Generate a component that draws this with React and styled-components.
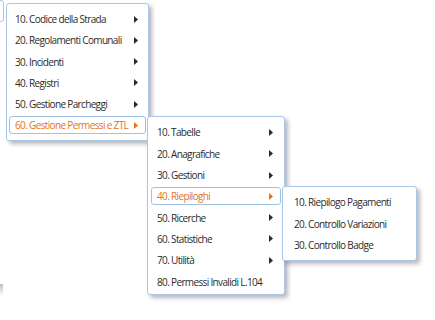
import React from 'react'
import styled, { createGlobalStyle } from 'styled-components'

const GlobalStyle = createGlobalStyle`
  html, body {
    margin: 0;
    padding: 0;
    background: #ffffff;
  }
  body {
    font-family: "Open Sans", "Liberation Sans", sans-serif;
    overflow: hidden;
  }
`

const Page = styled.div`
  position: relative;
  width: 435px;
  height: 320px;
  background: #fff;
  overflow: hidden;
`

const Menubar = styled.div`
  display: flex;
  height: 22px;
`

const BarItem = styled.div`
  margin-left: -10px;
  width: 12px;
  height: 20px;
  border: 1px solid #a9c7e6;
  border-radius: 3px;
`

const Sliver = styled.div`
  position: absolute;
  left: 0;
  top: 284px;
  width: 3px;
  height: 12px;
  background: linear-gradient(#b8c0c8, #ffffff);
`

const Menu = styled.ul`
  position: absolute;
  box-sizing: border-box;
  margin: 0;
  padding: ${p => p.$pad || '6px 2px'};
  list-style: none;
  background: #fff;
  border: 1px solid #a9c7e6;
  border-radius: 3px;
  box-shadow: 3px 3px 4px rgba(0, 0, 0, 0.28);
  display: flex;
  flex-direction: column;
  gap: 3.3px;
  width: ${p => p.$w}px;
`

const RootMenu = styled(Menu)`
  left: 6px;
  top: 3px;
  z-index: 1;
`

const SubMenu = styled(Menu)`
  left: calc(100% + 2px);
  top: ${p => p.$top}px;
`

const Item = styled.li`
  position: relative;
  display: flex;
  align-items: center;
  justify-content: space-between;
  box-sizing: border-box;
  height: 18px;
  padding: 0 7px 0 ${p => p.$left}px;
  border: 1px solid ${p => (p.$active ? '#9fc2e4' : 'transparent')};
  border-radius: 3px;
`

const Label = styled.span`
  font-size: 10px;
  letter-spacing: -0.65px;
  color: ${p => (p.$active ? '#e4731d' : '#2b2b2b')};
  white-space: nowrap;
`

const Arrow = ({ active }) => (
  <svg width="4" height="7" viewBox="0 0 4 7">
    <path d="M0 0 L4 3.5 L0 7 Z" fill={active ? '#e4731d' : '#1f2a3a'} />
  </svg>
)

const riepiloghi = {
  w: 135,
  pad: '6px 3px',
  left: 7,
  top: -2,
  items: [
    { label: '10. Riepilogo Pagamenti' },
    { label: '20. Controllo Variazioni' },
    { label: '30. Controllo Badge' },
  ],
}

const ztl = {
  w: 138,
  pad: '6px 3px 3px',
  left: 5,
  top: -1,
  items: [
    { label: '10. Tabelle', sub: true },
    { label: '20. Anagrafiche', sub: true },
    { label: '30. Gestioni', sub: true },
    { label: '40. Riepiloghi', sub: true, open: riepiloghi },
    { label: '50. Ricerche', sub: true },
    { label: '60. Statistiche', sub: true },
    { label: '70. Utilità', sub: true },
    { label: '80. Permessi Invalidi L.104' },
  ],
}

const main = {
  w: 143,
  left: 5,
  items: [
    { label: '10. Codice della Strada', sub: true },
    { label: '20. Regolamenti Comunali', sub: true },
    { label: '30. Incidenti', sub: true },
    { label: '40. Registri', sub: true },
    { label: '50. Gestione Parcheggi', sub: true },
    { label: '60. Gestione Permessi e ZTL', sub: true, open: ztl },
  ],
}

const Items = ({ menu }) =>
  menu.items.map(it => (
    <Item key={it.label} $active={!!it.open} $left={menu.left}>
      <Label $active={!!it.open}>{it.label}</Label>
      {it.sub && <Arrow active={!!it.open} />}
      {it.open && (
        <SubMenu $w={it.open.w} $pad={it.open.pad} $top={it.open.top}>
          <Items menu={it.open} />
        </SubMenu>
      )}
    </Item>
  ))

export default function App() {
  return (
    <Page>
      <GlobalStyle />
      <Menubar>
        <BarItem />
      </Menubar>
      <Sliver />
      <RootMenu $w={main.w}>
        <Items menu={main} />
      </RootMenu>
    </Page>
  )
}
